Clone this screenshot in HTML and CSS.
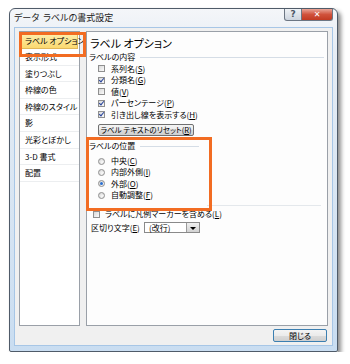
FILE: index.html
```html
<!DOCTYPE html>
<html lang="ja">
<head>
<meta charset="utf-8">
<title>データ ラベルの書式設定</title>
<link rel="stylesheet" href="styles.css">
</head>
<body>
<div class="window">
  <div class="titlebar">
    <span class="title">データ&nbsp; ラベルの書式設定</span>
    <div class="caption-btns">
      <span class="cap help">?</span>
      <span class="cap close">&#x2715;</span>
    </div>
  </div>
  <div class="client">
    <div class="main">
      <ul class="nav">
        <li class="sel">ラベル オプション</li>
        <li>表示形式</li>
        <li>塗りつぶし</li>
        <li>枠線の色</li>
        <li>枠線のスタイル</li>
        <li>影</li>
        <li>光彩とぼかし</li>
        <li>3-D 書式</li>
        <li>配置</li>
      </ul>
      <div class="panel">
        <div class="heading">ラベル オプション</div>
        <div class="group">
          <div class="group-label"><span>ラベルの内容</span></div>
          <div class="row"><span class="box"></span>系列名(<u>S</u>)</div>
          <div class="row"><span class="box on"></span>分類名(<u>G</u>)</div>
          <div class="row"><span class="box"></span>値(<u>V</u>)</div>
          <div class="row"><span class="box on"></span>パーセンテージ(<u>P</u>)</div>
          <div class="row"><span class="box on"></span>引き出し線を表示する(<u>H</u>)</div>
          <div class="btn reset">ラベル テキストのリセット(<u>R</u>)</div>
        </div>
        <div class="group pos">
          <div class="group-label"><span>ラベルの位置</span></div>
          <div class="radios">
            <div class="row"><span class="radio"></span>中央(<u>C</u>)</div>
            <div class="row"><span class="radio"></span>内部外側(<u>I</u>)</div>
            <div class="row"><span class="radio on"></span>外部(<u>O</u>)</div>
            <div class="row"><span class="radio"></span>自動調整(<u>F</u>)</div>
          </div>
        </div>
        <div class="sep"></div>
        <div class="row legend"><span class="box"></span>ラベルに凡例マーカーを含める(<u>L</u>)</div>
        <div class="delim">
          <span class="delim-label">区切り文字(<u>E</u>)</span>
          <span class="combo"><span class="combo-text">(改行)</span><span class="combo-btn"></span></span>
        </div>
      </div>
    </div>
    <div class="footer">
      <div class="btn close-btn">閉じる</div>
    </div>
  </div>
</div>
</body>
</html>
```

FILE: styles.css
```css
* {
  box-sizing: border-box;
  }
body {
  margin: 0;
  background: white;
  color: black;
  font: 8px/12px "Noto Sans CJK JP", sans-serif;
  font-feature-settings: "palt";
  }
u {
  text-decoration: underline;
  }
.window {
  margin: 8px 0 0 9px;
  width: 329px;
  height: 344px;
  border: 1px solid #4f5b69;
  border-radius: 6px 6px 2px 2px;
  background: linear-gradient(to bottom, #f4f6f9 0, #e7edf4 40px, #c9ddf1 100%);
  box-shadow: 3px 3px 4px rgba(0,0,0,0.45);
  padding: 0 4px 4px 4px;
  }
.titlebar {
  height: 18px;
  display: flex;
  align-items: flex-start;
  justify-content: space-between;
  }
.title {
  font-size: 9px;
  line-height: 18px;
  color: #1a1a1a;
  }
.caption-btns {
  display: flex;
  }
.cap {
  height: 12px;
  border: 1px solid #6c7683;
  border-top: none;
  text-align: center;
  font: bold 9px/11px "DejaVu Sans", sans-serif;
  }
.help {
  width: 18px;
  border-radius: 0 0 0 3px;
  background: linear-gradient(#eef1f5, #cdd5df);
  color: #4a5564;
  }
.close {
  width: 31px;
  border-left: none;
  border-radius: 0 0 3px 0;
  background: linear-gradient(#e9a597, #d0523c 50%, #c23a22);
  color: white;
  font-size: 8px;
  }
.client {
  height: 319px;
  border: 1px solid #a7c6e6;
  background: #f0f0f0;
  padding: 3px 4px 3px 4px;
  }
.main {
  display: flex;
  gap: 6px;
  height: 295px;
  }
.nav {
  list-style: none;
  margin: 0;
  width: 61px;
  border: 1px solid #9aa0a8;
  background: white;
  padding: 0;
  }
.nav li {
  height: 16.6px;
  line-height: 16px;
  padding-left: 5px;
  border-bottom: 1px solid #eceef0;
  white-space: nowrap;
  }
.nav li.sel {
  position: relative;
  height: 17px;
  padding-left: 3px;
  background: linear-gradient(#fdf0b0, #fbd970);
  border: 1px solid #e2b858;
  margin: 0 1px;
  }
.nav li.sel::after {
  content: "";
  position: absolute;
  left: -3px;
  top: -1px;
  width: 61px;
  height: 19px;
  border: 3px solid #f26c22;
  }
.panel {
  flex: 1;
  border: 1px solid #9aa0a8;
  background: #fdfdfd;
  padding: 4px 3px 0 2px;
  }
.heading {
  font-size: 11px;
  line-height: 14px;
  padding-left: 1px;
  margin-bottom: 1px;
  }
.group-label {
  display: flex;
  align-items: center;
  height: 12px;
  white-space: nowrap;
  }
.group-label::after {
  content: "";
  flex: 1;
  height: 1px;
  margin-left: 5px;
  background: #d5dde6;
  }
.group .row {
  padding-left: 9px;
  }
.row {
  display: flex;
  align-items: center;
  height: 11.5px;
  white-space: nowrap;
  }
.box {
  width: 7px;
  height: 7px;
  margin-right: 6px;
  border: 1px solid #8f8f8f;
  background: linear-gradient(135deg, #d8d8d8, #fbfbfb);
  position: relative;
  }
.box.on::after {
  content: "";
  position: absolute;
  left: 1px;
  top: -1px;
  width: 2px;
  height: 4px;
  border: solid #27439b;
  border-width: 0 1px 1px 0;
  transform: rotate(40deg);
  }
.btn {
  border: 1px solid #707070;
  border-radius: 2px;
  background: linear-gradient(#f4f4f4 0, #ebebeb 50%, #dcdcdc 51%, #cfcfcf 100%);
  text-align: center;
  white-space: nowrap;
  }
.reset {
  margin: 3.5px 0 0 9px;
  width: 96px;
  height: 12px;
  font-size: 7.5px;
  line-height: 10px;
  }
.pos {
  position: relative;
  margin-top: 4px;
  width: 114px;
  }
.pos::after {
  content: "";
  position: absolute;
  left: -3px;
  top: -3px;
  width: 120px;
  height: 68px;
  border: 3px solid #f26c22;
  }
.pos .group-label::after {
  margin-right: 4px;
  }
.radios {
  margin-top: 3.5px;
  }
.pos .row {
  height: 11.3px;
  padding-left: 9px;
  }
.radio {
  width: 7px;
  height: 7px;
  margin-right: 6px;
  border: 1px solid #8f8f8f;
  border-radius: 50%;
  background: radial-gradient(circle at 65% 65%, #fbfbfb, #d0d0d0);
  position: relative;
  }
.radio.on::after {
  content: "";
  position: absolute;
  left: 1px;
  top: 1px;
  width: 3px;
  height: 3px;
  border-radius: 50%;
  background: #2a6fd0;
  }
.sep {
  margin: 4px 3px 0 118px;
  height: 1px;
  background: #e4e8ec;
  }
.legend {
  margin-top: 3px;
  padding-left: 4px;
  }
.legend .box {
  margin-right: 5px;
  }
.delim {
  display: flex;
  align-items: center;
  height: 13px;
  margin-top: 1px;
  padding-left: 2px;
  }
.delim-label {
  width: 53px;
  }
.combo {
  display: flex;
  width: 56px;
  height: 11px;
  border: 1px solid #8a8a8a;
  background: white;
  }
.combo-text {
  flex: 1;
  padding-left: 4px;
  line-height: 9px;
  }
.combo-btn {
  width: 13px;
  border-left: 1px solid #9a9a9a;
  background: linear-gradient(#f0f0f0, #d2d2d2);
  position: relative;
  }
.combo-btn::after {
  content: "";
  position: absolute;
  left: 3px;
  top: 4px;
  border: 3px solid transparent;
  border-top: 3px solid black;
  border-bottom: none;
  }
.footer {
  display: flex;
  justify-content: flex-end;
  padding-top: 3px;
  padding-right: 1px;
  }
.close-btn {
  width: 54px;
  height: 13px;
  line-height: 11px;
  border-color: #3c7fb1;
  }
```
